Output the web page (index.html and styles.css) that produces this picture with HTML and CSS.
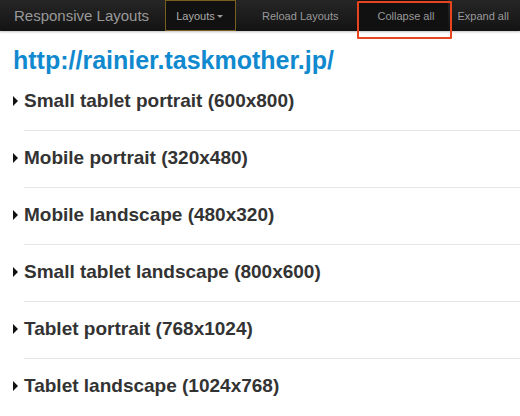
FILE: index.html
```html
<!DOCTYPE html>
<html>
<head>
<meta charset="utf-8">
<link rel="stylesheet" href="styles.css">
</head>
<body>
<div class="navbar">
  <span class="brand">Responsive Layouts</span>
  <ul class="nav">
    <li class="nav-item dropdown">Layouts<span class="caret"></span></li>
    <li class="nav-item reload">Reload Layouts</li>
    <li class="nav-item active">Collapse all</li>
    <li class="nav-item expand">Expand all</li>
  </ul>
  <div class="highlight"></div>
</div>
<div class="content">
  <h1 class="site">http://rainier.taskmother.jp/</h1>
  <div class="item"><span class="tri"></span>Small tablet portrait (600x800)</div>
  <div class="item"><span class="tri"></span>Mobile portrait (320x480)</div>
  <div class="item"><span class="tri"></span>Mobile landscape (480x320)</div>
  <div class="item"><span class="tri"></span>Small tablet landscape (800x600)</div>
  <div class="item"><span class="tri"></span>Tablet portrait (768x1024)</div>
  <div class="item last"><span class="tri"></span>Tablet landscape (1024x768)</div>
</div>
</body>
</html>
```
FILE: styles.css
```css
html, body { margin: 0; padding: 0; background: #fff; }
body { font-family: "Liberation Sans", Arial, sans-serif; width: 520px; height: 416px; overflow: hidden; }
.navbar {
  position: relative;
  height: 31px;
  display: flex;
  align-items: center;
  background: linear-gradient(#262626, #131313);
  box-shadow: 0 1px 2px rgba(0,0,0,0.25);
}
.brand { color: #999; font-size: 15px; margin-left: 14px; width: 151px; }
.nav { display: flex; list-style: none; margin: 0; padding: 0; height: 31px; }
.nav-item { color: #999; font-size: 11px; display: flex; align-items: center; height: 31px; box-sizing: border-box; }
.dropdown { border: 1px solid #7a5f1e; background: #111; width: 71px; justify-content: center; color: #aaa; padding-right: 2px; }
.caret { display: inline-block; width: 0; height: 0; border-top: 3px solid #999; border-left: 3px solid transparent; border-right: 3px solid transparent; margin-left: 2px; margin-top: 2px; }
.reload { padding: 0 19px 0 26px; }
.active { background: #111; width: 91px; justify-content: center; padding-left: 6px; }
.expand { padding-left: 9px; }
.highlight { position: absolute; left: 357px; top: 1px; width: 91px; height: 34px; border: 2px solid #e8441e; border-radius: 1px; }
.content { padding-left: 13px; }
.site { margin: 15px 0 0; font-size: 25px; line-height: 28px; color: #1189cf; font-weight: bold; }
.item {
  display: flex; align-items: center;
  font-size: 19px; line-height: 20px; font-weight: bold; color: #333;
  padding: 17px 0 20px;
  position: relative;
}
.item::after { content: ""; position: absolute; left: 11px; right: 0; bottom: 0; height: 1px; background: #e6e6e6; }
.item.last::after { display: none; }
.tri { width: 0; height: 0; border-left: 5px solid #111; border-top: 5px solid transparent; border-bottom: 5px solid transparent; margin-right: 6px; }
```
